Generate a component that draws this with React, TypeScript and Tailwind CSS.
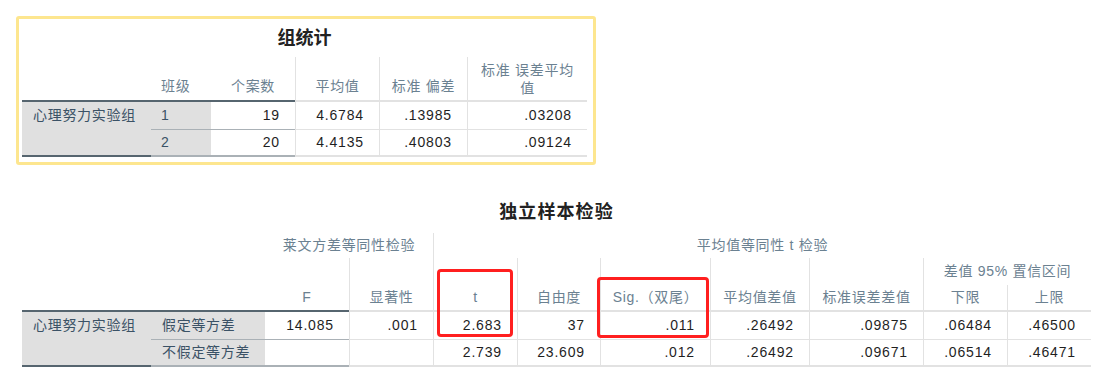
import type { ReactNode } from "react"

const font = "font-['Liberation_Sans','Noto_Sans_CJK_SC',sans-serif]"
const head = "text-[14px] text-[#6b8191] tracking-[0.05em]"
const label = "text-[14px] text-[#3b5266] tracking-[0.05em]"
const value = "text-[14px] text-[#1f1f1f] tracking-[0.06em]"
const vline = "border-l border-[#e2e2e2]"
const hline = "border-b-2 border-[#56656f]"
const sep = "border-t border-[#aab1b6]"
const gray = "bg-[#e0e0e0]"

function Num({ children, className = "" }: { children: ReactNode; className?: string }) {
  return (
    <div className={`flex items-center justify-end pr-[15px] ${value} ${className}`}>
      {children}
    </div>
  )
}

function GroupStats() {
  return (
    <div className="ml-[16px] mt-[16px] w-[580px] rounded-[3px] border-[3px] border-[#fde68f] pb-[5px] pl-[3px] pr-[6px]">
      <div className="flex h-[38px] items-center justify-center text-[18px] font-bold text-[#222]">
        组统计
      </div>

      <div className="grid grid-cols-[129px_60px_84px_84px_88px_120px] grid-rows-[45px_27px_28px]">
        <div className={hline} />
        <div className={`flex items-end pb-[3px] pl-[10px] ${head} ${hline}`}>班级</div>
        <div className={`flex items-end justify-center pb-[3px] ${head} ${hline}`}>个案数</div>
        <div className={`flex items-end justify-center pb-[3px] ${head} ${hline} ${vline}`}>平均值</div>
        <div className={`flex items-end justify-center pb-[3px] ${head} ${hline} ${vline}`}>标准 偏差</div>
        <div className={`flex items-end justify-center pb-[3px] text-center leading-[18px] ${head} ${hline} ${vline}`}>
          标准 误差平均<br />值
        </div>

        <div className={`flex items-center pl-[11px] ${gray} ${label}`}>心理努力实验组</div>
        <div className={`flex items-center pl-[10px] ${gray} ${label}`}>1</div>
        <Num>19</Num>
        <Num className={vline}>4.6784</Num>
        <Num className={vline}>.13985</Num>
        <Num className={vline}>.03208</Num>

        <div className={`${gray} ${hline}`} />
        <div className={`flex items-center pl-[10px] ${gray} ${label} ${sep} ${hline}`}>2</div>
        <Num className={`${sep} ${hline}`}>20</Num>
        <Num className={`${sep} ${hline} ${vline}`}>4.4135</Num>
        <Num className={`${sep} ${hline} ${vline}`}>.40803</Num>
        <Num className={`${sep} ${hline} ${vline}`}>.09124</Num>
      </div>
    </div>
  )
}

function IndependentTest() {
  const rowHead = `flex items-end justify-center pb-[2px] row-span-2 ${head} ${hline} ${vline}`

  return (
    <div className="mt-[35px] ml-[22px] w-[1069px]">
      <div className="mb-[9px] flex h-[24px] items-center justify-center text-[18px] font-bold text-[#222] tracking-[0.06em]">
        独立样本检验
      </div>

      <div className="relative">
        <div className="grid grid-cols-[129px_114px_84px_84px_84px_83px_110px_99px_114px_84px_84px] grid-rows-[25px_27px_27px_27px_28px]">
          <div className={`col-span-2 row-span-3 ${hline}`} />
          <div className={`col-span-2 flex items-center justify-center ${head}`}>莱文方差等同性检验</div>
          <div className={`col-span-7 flex items-center justify-center ${head} ${vline}`}>平均值等同性 t 检验</div>

          <div className={`col-start-3 row-start-2 flex items-end justify-center pb-[2px] row-span-2 ${head} ${hline}`}>F</div>
          <div className={`col-start-4 row-start-2 ${rowHead}`}>显著性</div>
          <div className={`col-start-5 row-start-2 ${rowHead}`}>t</div>
          <div className={`col-start-6 row-start-2 ${rowHead}`}>自由度</div>
          <div className={`col-start-7 row-start-2 ${rowHead}`}>Sig.（双尾）</div>
          <div className={`col-start-8 row-start-2 ${rowHead}`}>平均值差值</div>
          <div className={`col-start-9 row-start-2 ${rowHead}`}>标准误差差值</div>
          <div className={`col-span-2 col-start-10 row-start-2 flex items-center justify-center ${head} ${vline}`}>
            差值 95% 置信区间
          </div>
          <div className={`col-start-10 row-start-3 flex items-center justify-center ${head} ${hline} ${vline}`}>下限</div>
          <div className={`col-start-11 row-start-3 flex items-center justify-center ${head} ${hline} ${vline}`}>上限</div>

          <div className={`flex items-center pl-[11px] ${gray} ${label}`}>心理努力实验组</div>
          <div className={`flex items-center pl-[11px] ${gray} ${label}`}>假定等方差</div>
          <Num>14.085</Num>
          <Num className={vline}>.001</Num>
          <Num className={vline}>2.683</Num>
          <Num className={vline}>37</Num>
          <Num className={vline}>.011</Num>
          <Num className={vline}>.26492</Num>
          <Num className={vline}>.09875</Num>
          <Num className={vline}>.06484</Num>
          <Num className={vline}>.46500</Num>

          <div className={`${gray} ${hline}`} />
          <div className={`flex items-center pl-[11px] ${gray} ${label} ${sep} ${hline}`}>不假定等方差</div>
          <Num className={`${sep} ${hline}`}>{""}</Num>
          <Num className={`${sep} ${hline} ${vline}`}>{""}</Num>
          <Num className={`${sep} ${hline} ${vline}`}>2.739</Num>
          <Num className={`${sep} ${hline} ${vline}`}>23.609</Num>
          <Num className={`${sep} ${hline} ${vline}`}>.012</Num>
          <Num className={`${sep} ${hline} ${vline}`}>.26492</Num>
          <Num className={`${sep} ${hline} ${vline}`}>.09671</Num>
          <Num className={`${sep} ${hline} ${vline}`}>.06514</Num>
          <Num className={`${sep} ${hline} ${vline}`}>.46471</Num>
        </div>

        {/* highlight boxes drawn over the table */}
        <div className="absolute left-[415px] top-[36px] h-[68px] w-[76px] rounded-[4px] border-[3px] border-[#ff1f1f]" />
        <div className="absolute left-[575px] top-[44px] h-[61px] w-[112px] rounded-[4px] border-[3px] border-[#ff1f1f]" />
      </div>
    </div>
  )
}

export default function App() {
  return (
    <div className={`h-[380px] w-[1098px] overflow-hidden bg-white ${font}`}>
      <GroupStats />
      <IndependentTest />
    </div>
  )
}
